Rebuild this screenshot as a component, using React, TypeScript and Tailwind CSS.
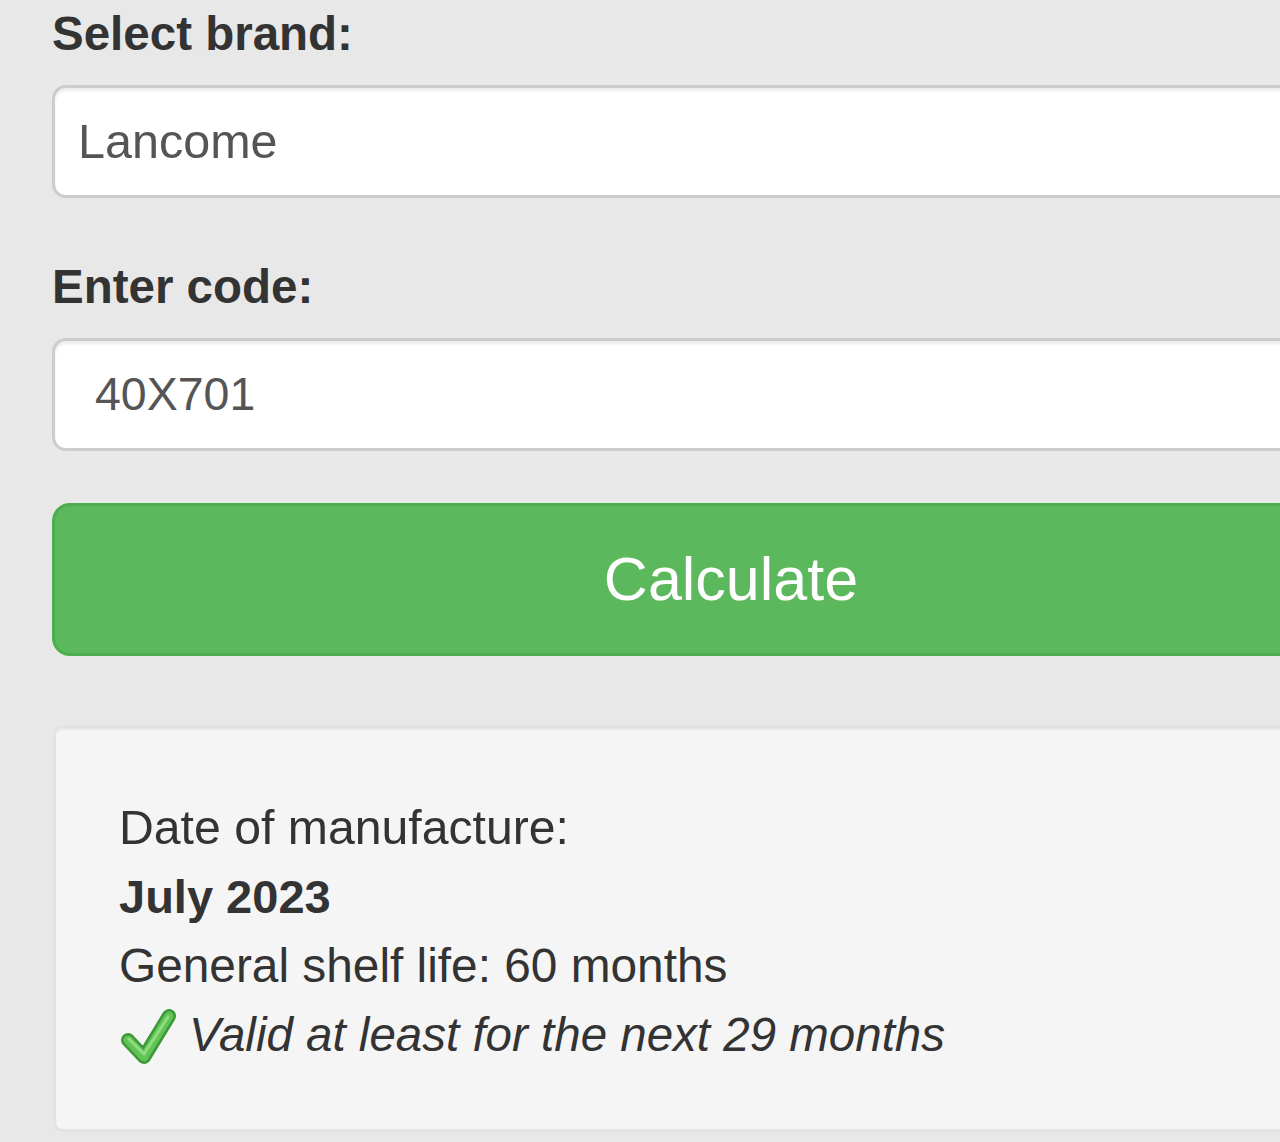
import React from "react";

const font = "font-['Liberation_Sans',Arial,Helvetica,sans-serif]";

function CheckIcon() {
    return (
        <svg width="58" height="58" viewBox="0 0 58 58" className="shrink-0">
            <polyline points="9,34 25,51 50,10" fill="none" stroke="#3c9a36" strokeWidth="14" strokeLinecap="round" strokeLinejoin="round" />
            <polyline points="9,34 25,51 50,10" fill="none" stroke="#62c456" strokeWidth="9" strokeLinecap="round" strokeLinejoin="round" />
            <polyline points="10,33 25,48 49,11" fill="none" stroke="#9be389" strokeWidth="3" strokeLinecap="round" strokeLinejoin="round" opacity="0.8" />
        </svg>
    );
}

function Field({ label, value, pad, size }: { label: string; value: string; pad: string; size: string }) {
    return (
        <div>
            <label className="block text-[47.5px] leading-[68px] font-bold text-[#333333] mb-[17px]">{label}</label>
            <div className={`h-[113px] flex items-center bg-white border-[3px] border-[#cccccc] rounded-[14px] shadow-[inset_0_3px_3px_rgba(0,0,0,0.075)] text-[#555555] ${size} ${pad}`}>
                {value}
            </div>
        </div>
    );
}

export default function App() {
    return (
        <div className={`w-full min-h-[1142px] overflow-hidden bg-[#e8e8e8] ${font}`}>
            <div className="w-[1358px] ml-[52px] flex flex-col">
                <Field label="Select brand:" value="Lancome" pad="pl-[23px]" size="text-[48.5px]" />
                <div className="mt-[55px]">
                    <Field label="Enter code:" value="40X701" pad="pl-[40px]" size="text-[46.5px]" />
                </div>

                <button className="mt-[52px] h-[153px] w-full bg-[#5cb85c] border-[3px] border-[#4cae4c] rounded-[18px] text-white text-[61px] flex items-center justify-center">
                    Calculate
                </button>

                <div className="mt-[69px] ml-[1px] bg-[#f5f5f5] border-[3px] border-[#e3e3e3] rounded-[10px] shadow-[inset_0_2px_2px_rgba(0,0,0,0.05)] pl-[63px] pt-[65px] pb-[60px] text-[48.2px] leading-[69px] text-[#333333]">
                    <div>Date of manufacture:</div>
                    <div className="font-bold text-[47px]">July 2023</div>
                    <div className="text-[47.8px]">General shelf life: 60 months</div>
                    <div className="flex items-center gap-[12px] italic text-[47.5px]">
                        <CheckIcon />
                        <span>Valid at least for the next 29 months</span>
                    </div>
                </div>
            </div>
        </div>
    );
}
